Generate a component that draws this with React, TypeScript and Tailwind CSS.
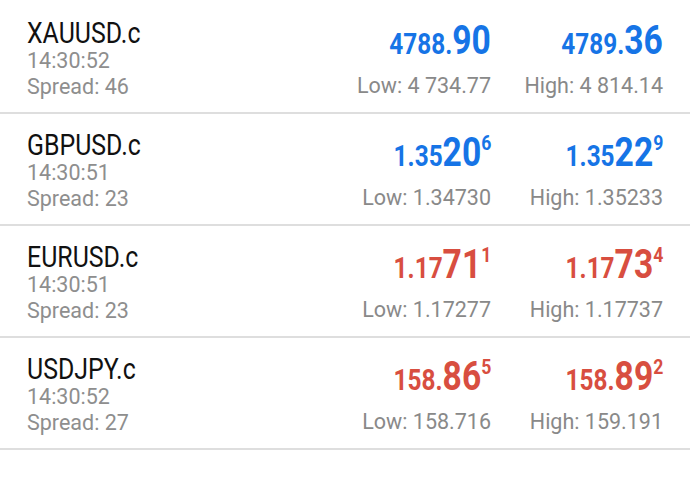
const ROWS = [
  {
    symbol: "XAUUSD.c",
    time: "14:30:52",
    spread: "46",
    color: "blue",
    bid: ["4788.", "90", ""],
    ask: ["4789.", "36", ""],
    low: "4 734.77",
    high: "4 814.14",
  },
  {
    symbol: "GBPUSD.c",
    time: "14:30:51",
    spread: "23",
    color: "blue",
    bid: ["1.35", "20", "6"],
    ask: ["1.35", "22", "9"],
    low: "1.34730",
    high: "1.35233",
  },
  {
    symbol: "EURUSD.c",
    time: "14:30:51",
    spread: "23",
    color: "red",
    bid: ["1.17", "71", "1"],
    ask: ["1.17", "73", "4"],
    low: "1.17277",
    high: "1.17737",
  },
  {
    symbol: "USDJPY.c",
    time: "14:30:52",
    spread: "27",
    color: "red",
    bid: ["158.", "86", "5"],
    ask: ["158.", "89", "2"],
    low: "158.716",
    high: "159.191",
  },
];

function Price({
  parts,
  color,
  label,
  value,
}: {
  parts: string[];
  color: string;
  label: string;
  value: string;
}) {
  const [small, big, pip] = parts;
  return (
    <div className="w-[172px] flex flex-col items-end pt-[18px]">
      <div
        className={
          "h-[41px] text-[40px] leading-[41px] font-bold whitespace-nowrap " +
          (color === "blue" ? "text-[#1674e6]" : "text-[#d84e40]")
        }
      >
        <span className="inline-block origin-right scale-x-[0.84]">
          <span className="text-[29px]">{small}</span>
          <span>{big}</span>
          {pip && (
            <span className="relative top-[1px] align-top text-[21px] leading-none">
              {pip}
            </span>
          )}
        </span>
      </div>
      <div className="mt-[12px] text-[21.5px] leading-[26px] text-[#898989] whitespace-nowrap">
        {label}: {value}
      </div>
    </div>
  );
}

export default function App() {
  return (
    <div className="w-[690px] h-[489px] bg-white pt-[2px] font-['Roboto',sans-serif] overflow-hidden">
      {ROWS.map((r) => (
        <div
          key={r.symbol}
          className="h-[112px] flex border-b-2 border-[#dedede] pr-[27px]"
        >
          <div className="flex-1 pl-[27px] pt-[15px] flex flex-col">
            <div className="text-[30px] leading-[31px] text-[#111] whitespace-nowrap">
              <span className="inline-block origin-left scale-x-[0.83]">
                {r.symbol}
              </span>
            </div>
            <div className="text-[21.5px] leading-[26px] text-[#8e8e8e]">
              {r.time}
            </div>
            <div className="text-[21.5px] leading-[26px] text-[#8e8e8e]">
              Spread: {r.spread}
            </div>
          </div>
          <Price parts={r.bid} color={r.color} label="Low" value={r.low} />
          <Price parts={r.ask} color={r.color} label="High" value={r.high} />
        </div>
      ))}
    </div>
  );
}
